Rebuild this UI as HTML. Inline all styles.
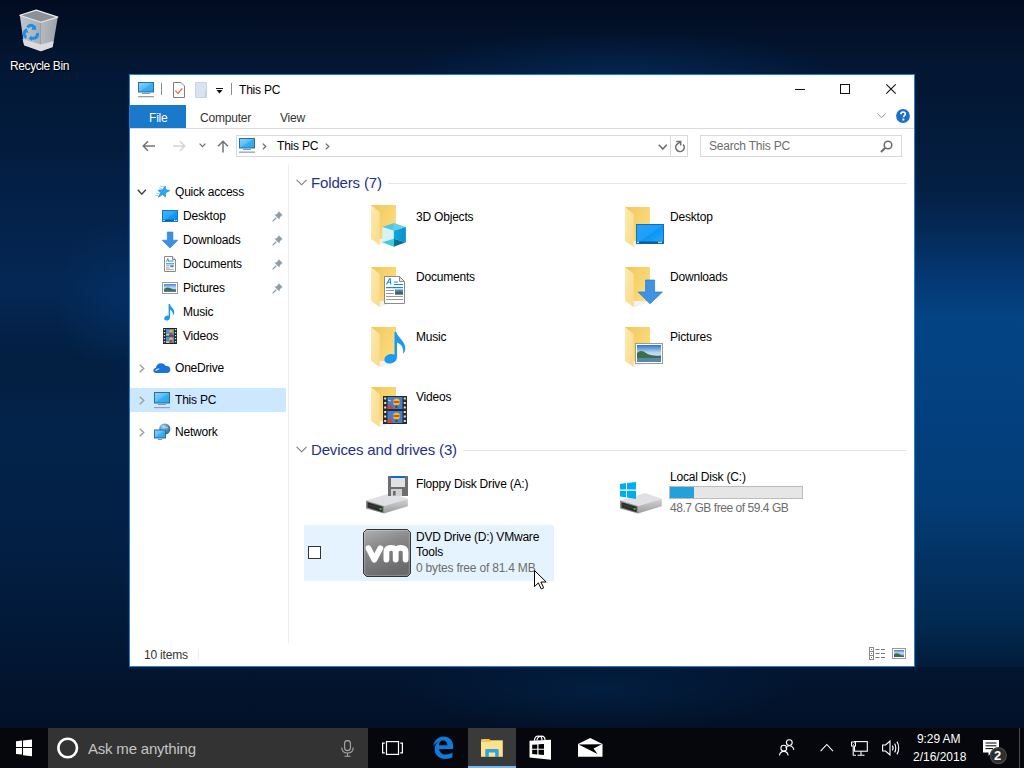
<!DOCTYPE html>
<html><head><meta charset="utf-8">
<style>
*{margin:0;padding:0;box-sizing:border-box}
html,body{width:1024px;height:768px;overflow:hidden}
body{position:relative;font-family:"Liberation Sans",sans-serif;font-size:12px;color:#000;background:#03213f;}
.a{position:absolute}
#bg{left:0;top:0;width:1024px;height:728px;
background:
radial-gradient(ellipse 220px 45px at 620px 76px, rgba(4,50,100,.55), rgba(4,50,100,0) 100%),
radial-gradient(ellipse 200px 40px at 600px 690px, rgba(4,42,88,.45), rgba(4,42,88,0) 100%),

radial-gradient(ellipse 70px 80px at 125px 300px, rgba(5,55,110,.5), rgba(5,55,110,0) 100%),
linear-gradient(180deg,#020b20 0,#031836 74px,#031c3e 150px,#04224a 210px,#042754 290px,#031e40 362px,#03244a 430px,#032046 520px,#021a3a 620px,#02132b 700px,#021128 728px);}
#rbg{left:915px;top:74px;width:109px;height:593px;
background:linear-gradient(180deg,#031632 0,#041f42 110px,#042a58 160px,#053874 205px,#044484 245px,#034080 326px,#033d78 426px,#033262 486px,#022a52 546px,#021c3a 593px);}
#win{left:129px;top:74px;width:786px;height:593px;background:#fff;border:1px solid #1883d7}
#taskbar{left:0;top:728px;width:1024px;height:40px;background:#05070c}
.t{position:absolute;white-space:nowrap;line-height:12px;font-size:12px;letter-spacing:-0.2px}
.h{font-size:15px;line-height:15px;color:#1e3287;letter-spacing:-0.15px}
svg{position:absolute;overflow:visible}
</style></head>
<body>
<div id="bg" class="a"></div><div id="rbg" class="a"></div>
<svg style="left:0;top:0;width:0;height:0" width="0" height="0">
<defs>
  <linearGradient id="fback" x1="0" y1="0" x2="1" y2=".6"><stop offset="0" stop-color="#f0c65c"/><stop offset="1" stop-color="#fcdc7c"/></linearGradient>
  <linearGradient id="fflap" x1="0" y1="0" x2="1" y2="1"><stop offset="0" stop-color="#feeaae"/><stop offset="1" stop-color="#f8da8a"/></linearGradient>
  <symbol id="folder" viewBox="0 0 40 46">
    <rect x="5" y="5" width="25" height="34" fill="url(#fback)"/>
    <path d="M13.7 45 L16 44.6 L30 39 H13.7 Z" fill="#d8d8e0" opacity=".35"/>
    <path d="M5 5 L13.7 12 V45 L5 39 Z" fill="url(#fflap)"/>
  </symbol>
</defs>
</svg>


<!-- recycle bin -->
<svg style="left:0;top:0" width="80" height="60" viewBox="0 0 80 60">
  <defs>
    <linearGradient id="rbl" x1="0" y1="0" x2="1" y2="0"><stop offset="0" stop-color="#c2c6cc"/><stop offset="1" stop-color="#a9aeb5"/></linearGradient>
    <linearGradient id="rbr" x1="0" y1="0" x2="1" y2="0"><stop offset="0" stop-color="#b4b9bf"/><stop offset="1" stop-color="#9da3aa"/></linearGradient>
  </defs>
  <path d="M19.8 15.3 L40.9 22.3 L40.9 51.3 L24.1 45.3 Z" fill="url(#rbl)"/>
  <path d="M40.9 22.3 L57.8 17.1 L52.7 47.1 L40.9 51.3 Z" fill="url(#rbr)"/>
  <path d="M22.5 39 L40.9 44.5 L53.6 41 L52.7 47.1 L40.9 51.3 L24.1 45.3 Z" fill="#d9dbde"/>
  <path d="M19.8 15.3 L36.3 10.1 L57.8 17.1 L40.9 22.3 Z" fill="#8c9198" stroke="#e8eaec" stroke-width="1.2" stroke-linejoin="round"/>
  <path d="M27.5 27.5 Q29 25 31.5 25.3 L35.5 27.8" fill="none" stroke="#1e8fe8" stroke-width="3"/>
  <path d="M33.5 24.5 L37 29.5 L31.5 30 Z" fill="#1e8fe8"/>
  <path d="M26.5 37.5 Q24 36.5 24.3 33.5 L25.5 30" fill="none" stroke="#1e8fe8" stroke-width="3"/>
  <path d="M23 31.5 L26.5 28 L28.5 33 Z" fill="#1e8fe8"/>
  <path d="M37.5 33 Q38 37 35 38 L30.5 38.5" fill="none" stroke="#1e8fe8" stroke-width="3"/>
  <path d="M31.5 35.5 L28.5 38.5 L32 41 Z" fill="#1e8fe8"/>
</svg>
<div class="t" style="left:10px;top:60px;color:#fff;letter-spacing:-0.4px;text-shadow:0 0 2px #000,1px 1px 1px #000">Recycle Bin</div>

<div id="win" class="a"></div>


<!-- title icons -->
<svg style="left:138px;top:82px" width="16" height="16" viewBox="0 0 16 16">
  <defs><linearGradient id="scr" x1="0" y1="0" x2="1" y2="1"><stop offset="0" stop-color="#8fd3ff"/><stop offset=".5" stop-color="#55bdf7"/><stop offset=".5" stop-color="#3cb0f3"/><stop offset="1" stop-color="#2aa3ec"/></linearGradient></defs>
  <rect x="0.5" y="0.5" width="15" height="9.5" fill="url(#scr)" stroke="#2d6e9c" stroke-width="1"/>
  <rect x="4" y="11" width="8" height="1" fill="#7e98ae"/>
  <rect x="0" y="14" width="16" height="1.3" fill="#8da2b5"/>
</svg>
<div class="a" style="left:161px;top:83px;width:1px;height:12px;background:#8a8a8a"></div>
<svg style="left:173px;top:82px" width="12" height="16" viewBox="0 0 12 16">
  <path d="M0.5 0.5 H8 L11.5 4 V15.5 H0.5 Z" fill="#fff" stroke="#7d7d7d"/>
  <path d="M8 0.5 L11.5 4" stroke="#c8c8c8"/>
  <path d="M2.3 8.6 L5 11.3 L9.3 6.4" fill="none" stroke="#f2622a" stroke-width="1.2"/>
</svg>
<svg style="left:195px;top:82px" width="13" height="16" viewBox="0 0 13 16">
  <path d="M0.5 0.5 H11.5 V15.5 H0.5 Z" fill="#dae3f0" stroke="#c9d5e6"/>
  <path d="M11.5 9 V15.5 H10 V9 Z" fill="#c5d2e4"/>
</svg>
<svg style="left:216px;top:88px" width="8" height="7" viewBox="0 0 8 7">
  <rect x="0" y="0" width="7" height="1" fill="#111"/>
  <path d="M0.5 2 H6.5 L3.5 5.5 Z" fill="#111"/>
</svg>
<div class="a" style="left:231px;top:83px;width:1px;height:12px;background:#8a8a8a"></div>

<!-- window controls -->
<div class="a" style="left:795px;top:89px;width:10px;height:1px;background:#111"></div>
<div class="a" style="left:840px;top:84px;width:10px;height:10px;border:1px solid #111"></div>
<svg style="left:886px;top:84px" width="10" height="10" viewBox="0 0 10 10"><path d="M0.3 0.3 L9.7 9.7 M9.7 0.3 L0.3 9.7" stroke="#111" stroke-width="1.1"/></svg>
<svg style="left:877px;top:113px" width="9" height="6" viewBox="0 0 9 6"><path d="M0.5 0.5 L4.5 4.8 L8.5 0.5" fill="none" stroke="#9a9a9a" stroke-width="1"/></svg>
<svg style="left:896px;top:109px" width="14" height="14" viewBox="0 0 14 14">
  <circle cx="7" cy="7" r="6.9" fill="#1a6fc9"/>
  <path d="M4.9 5.2 C4.9 3.6 6 3 7.1 3 C8.3 3 9.3 3.7 9.3 4.9 C9.3 6.4 7.5 6.6 7.5 8.2" fill="none" stroke="#fff" stroke-width="1.7"/>
  <rect x="6.4" y="9.6" width="1.9" height="1.9" fill="#fff"/>
</svg>

<!-- nav arrows -->
<svg style="left:142px;top:140px" width="14" height="12" viewBox="0 0 14 12"><path d="M13 6 H1.5 M6 1.2 L1.2 6 L6 10.8" fill="none" stroke="#737373" stroke-width="1.5"/></svg>
<svg style="left:172px;top:140px" width="14" height="12" viewBox="0 0 14 12"><path d="M1 6 H12.5 M8 1.2 L12.8 6 L8 10.8" fill="none" stroke="#d4d4d4" stroke-width="1.5"/></svg>
<svg style="left:199px;top:143px" width="7" height="5" viewBox="0 0 7 5"><path d="M0.6 0.6 L3.5 3.6 L6.4 0.6" fill="none" stroke="#6a6a6a" stroke-width="1.2"/></svg>
<svg style="left:217px;top:140px" width="12" height="13" viewBox="0 0 12 13"><path d="M6 12.5 V1.5 M1 6.3 L6 1.2 L11 6.3" fill="none" stroke="#737373" stroke-width="1.5"/></svg>

<svg style="left:239px;top:138px" width="16" height="15" viewBox="0 0 16 15">
  <rect x="0.5" y="0.5" width="15" height="9.5" fill="url(#scr)" stroke="#2d6e9c" stroke-width="1"/>
  <rect x="4" y="11" width="8" height="1" fill="#7e98ae"/>
  <rect x="0" y="13.5" width="16" height="1.3" fill="#8da2b5"/>
</svg>
<svg style="left:262px;top:143px" width="5" height="7" viewBox="0 0 5 7"><path d="M0.8 0.6 L3.8 3.5 L0.8 6.4" fill="none" stroke="#666" stroke-width="1.2"/></svg>
<svg style="left:325px;top:143px" width="5" height="7" viewBox="0 0 5 7"><path d="M0.8 0.6 L3.8 3.5 L0.8 6.4" fill="none" stroke="#666" stroke-width="1.2"/></svg>
<svg style="left:658px;top:144px" width="10" height="7" viewBox="0 0 10 7"><path d="M0.8 0.8 L4.8 5 L8.8 0.8" fill="none" stroke="#6f6f6f" stroke-width="1.6"/></svg>
<svg style="left:670px;top:136px" width="20" height="20" viewBox="0 0 20 20">
  <path d="M13.2 8.6 A4.2 4.2 0 1 1 7.2 8.2 L10.6 5.6" fill="none" stroke="#707070" stroke-width="1.6"/>
  <path d="M6.2 5.5 H10.7 V9.6" fill="none" stroke="#707070" stroke-width="1.5"/>
</svg>
<svg style="left:880px;top:140px" width="13" height="13" viewBox="0 0 13 13">
  <circle cx="8" cy="5" r="3.8" fill="none" stroke="#6a6a6a" stroke-width="1.5"/>
  <path d="M5.3 7.7 L1 12" stroke="#6a6a6a" stroke-width="2"/>
</svg>

<!-- title bar -->
<div class="t" style="left:239px;top:84px">This PC</div>
<!-- ribbon tabs -->
<div class="a" style="left:130px;top:105px;width:56px;height:23px;background:#1979ca"></div>
<div class="t" style="left:149px;top:112px;color:#fff">File</div>
<div class="t" style="left:200px;top:112px;color:#333">Computer</div>
<div class="t" style="left:280px;top:112px;color:#333">View</div>
<div class="a" style="left:130px;top:128px;width:784px;height:1px;background:#dadbdc"></div>

<!-- address row -->
<div class="a" style="left:236px;top:135px;width:452px;height:22px;border:1px solid #d9d9d9"></div>
<div class="a" style="left:670px;top:135px;width:1px;height:22px;background:#d9d9d9"></div>
<div class="t" style="left:277px;top:140px">This PC</div>
<div class="a" style="left:700px;top:135px;width:202px;height:22px;border:1px solid #d9d9d9"></div>
<div class="t" style="left:709px;top:140px;color:#6d6d6d">Search This PC</div>

<!-- nav pane -->
<div class="a" style="left:288px;top:164px;width:1px;height:479px;background:#f0f0f0"></div>
<div class="a" style="left:130px;top:388px;width:156px;height:24px;background:#cce8ff"></div>
<div class="t" style="left:175px;top:186px">Quick access</div>
<div class="t" style="left:183px;top:210px">Desktop</div>
<div class="t" style="left:183px;top:234px">Downloads</div>
<div class="t" style="left:183px;top:258px">Documents</div>
<div class="t" style="left:183px;top:282px">Pictures</div>
<div class="t" style="left:183px;top:306px">Music</div>
<div class="t" style="left:183px;top:330px">Videos</div>
<div class="t" style="left:175px;top:362px">OneDrive</div>
<div class="t" style="left:175px;top:394px">This PC</div>
<div class="t" style="left:175px;top:426px">Network</div>


<!-- nav icons -->
<svg style="left:137px;top:189px" width="10" height="7" viewBox="0 0 10 7"><path d="M0.8 0.8 L4.8 5.2 L8.8 0.8" fill="none" stroke="#444" stroke-width="1.5"/></svg>
<svg style="left:150px;top:180px" width="24" height="24" viewBox="0 0 24 24">
  <path d="M10.3 6.3 H14.5 M9.2 8.3 H12 M6.2 13.4 H9 M5.3 15.5 H8" stroke="#7cc4f2" stroke-width="1" opacity=".8"/>
  <path d="M15.3 6.1 L15.8 9.7 L19.8 10.5 L15.8 12.7 L15.3 17 L12.6 14.6 L8.3 17.3 L10.6 12.8 L8 10.3 L12.5 9.7 Z" fill="#2ba8f2" stroke="#1c8ad9" stroke-width=".7" stroke-linejoin="round"/>
</svg>
<svg style="left:162px;top:210px" width="16" height="12" viewBox="0 0 16 12">
  <defs><linearGradient id="dsk" x1="0" y1="0" x2="1" y2="1"><stop offset="0" stop-color="#3db4ff"/><stop offset=".5" stop-color="#29a8fb"/><stop offset=".5" stop-color="#159cf5"/><stop offset="1" stop-color="#0e8de6"/></linearGradient></defs>
  <rect x="0.5" y="0.5" width="15" height="11" fill="url(#dsk)" stroke="#1779c9"/>
  <rect x="1" y="9.6" width="14" height="1.6" fill="#0a5ea8"/>
  <circle cx="2" cy="10.4" r=".7" fill="#fff"/><circle cx="12.5" cy="10.4" r=".7" fill="#fff"/><circle cx="14.2" cy="10.4" r=".7" fill="#fff"/>
</svg>
<svg style="left:162px;top:232px" width="16" height="16" viewBox="0 0 16 16">
  <path d="M5.3 0 H10.9 V8.2 H15.9 L8 16 L0.1 8.2 H5.3 Z" fill="#3a90e2" stroke="#2a7bd3" stroke-width=".6"/>
</svg>
<svg style="left:164px;top:256px" width="12" height="16" viewBox="0 0 12 16">
  <path d="M0.5 0.5 H8.5 L11.5 3.5 V15.5 H0.5 Z" fill="#fff" stroke="#8a8a8a"/>
  <path d="M8.5 0.5 V3.5 H11.5" fill="#e8e8e8" stroke="#8a8a8a"/>
  <path d="M2.5 6 L3.8 2.5 L5 6" fill="none" stroke="#1a86d9" stroke-width=".9"/>
  <rect x="5.5" y="4.5" width="4" height="1" fill="#1a86d9"/>
  <rect x="2" y="7.3" width="8" height="1" fill="#1a86d9"/>
  <rect x="2" y="9.3" width="3.5" height="1" fill="#999"/><rect x="6.2" y="9.1" width="3.5" height="2.2" fill="#5d8fb3"/>
  <rect x="2" y="11.4" width="3.5" height="1" fill="#999"/>
  <rect x="2" y="13.2" width="8" height="1" fill="#aaa"/>
</svg>
<svg style="left:162px;top:282px" width="16" height="12" viewBox="0 0 16 12">
  <defs><linearGradient id="pic" x1="0" y1="0" x2="0" y2="1"><stop offset="0" stop-color="#3f86d8"/><stop offset=".5" stop-color="#c9ddef"/><stop offset="1" stop-color="#6f98b0"/></linearGradient></defs>
  <rect x="0.5" y="0.5" width="15" height="11" fill="#fff" stroke="#9a9a9a"/>
  <rect x="2" y="2" width="12" height="8" fill="url(#pic)"/>
  <path d="M2 7 Q5 4.5 8 6 T14 7.5 V10 H2 Z" fill="#3e6b4c"/>
  <rect x="2" y="8.6" width="12" height="1.4" fill="#4a7fa8"/>
</svg>
<svg style="left:164px;top:304px" width="11" height="17" viewBox="0 0 11 17">
  <path d="M4.6 0 H6 C6.3 3 10.5 4.5 10.3 8.5 C10.1 10 9.4 10.8 8.8 11.4 C9.3 9.5 8.5 6.8 6.1 5.8 V13.2 C6.1 15.3 4.3 16.6 2.6 16.6 C1.2 16.6 0.2 15.8 0.2 14.6 C0.2 13 1.9 11.6 3.6 11.6 C4 11.6 4.3 11.7 4.6 11.8 Z" fill="#1a9af0"/>
</svg>
<svg style="left:163px;top:328px" width="14" height="16" viewBox="0 0 14 16">
  <rect x="0" y="0" width="14" height="16" fill="#222"/>
  <rect x="0.8" y="1" width="1.4" height="1.3" fill="#ddd"/><rect x="0.8" y="4" width="1.4" height="1.3" fill="#ddd"/><rect x="0.8" y="7" width="1.4" height="1.3" fill="#ddd"/><rect x="0.8" y="10" width="1.4" height="1.3" fill="#ddd"/><rect x="0.8" y="13" width="1.4" height="1.3" fill="#ddd"/>
  <rect x="11.8" y="1" width="1.4" height="1.3" fill="#ddd"/><rect x="11.8" y="4" width="1.4" height="1.3" fill="#ddd"/><rect x="11.8" y="7" width="1.4" height="1.3" fill="#ddd"/><rect x="11.8" y="10" width="1.4" height="1.3" fill="#ddd"/><rect x="11.8" y="13" width="1.4" height="1.3" fill="#ddd"/>
  <rect x="3" y="1" width="8" height="6.5" fill="#4f8fd8"/><rect x="3" y="8.5" width="8" height="6.5" fill="#4f8fd8"/>
  <circle cx="8" cy="3.5" r="1.8" fill="#e8b420"/><rect x="7" y="4.5" width="2" height="2.5" fill="#c7382a"/>
  <circle cx="8" cy="11" r="1.8" fill="#e8b420"/><rect x="7" y="12" width="2" height="2.5" fill="#c7382a"/>
  <rect x="3" y="6" width="3" height="1.5" fill="#e0d080"/><rect x="3" y="13.5" width="3" height="1.5" fill="#e0d080"/>
</svg>
<svg style="left:272px;top:211px" width="11" height="11" viewBox="0 0 11 11"><path d="M6.8 0.3 L10.7 4.2 L9.6 4.6 L7.6 6.8 L7.4 8.6 L2.4 3.6 L4.2 3.4 L6.4 1.4 Z" fill="#8e9ca6"/><path d="M4.2 6.8 L0.6 10.4" stroke="#8e9ca6" stroke-width="1.3"/></svg>
<svg style="left:272px;top:235px" width="11" height="11" viewBox="0 0 11 11"><path d="M6.8 0.3 L10.7 4.2 L9.6 4.6 L7.6 6.8 L7.4 8.6 L2.4 3.6 L4.2 3.4 L6.4 1.4 Z" fill="#8e9ca6"/><path d="M4.2 6.8 L0.6 10.4" stroke="#8e9ca6" stroke-width="1.3"/></svg>
<svg style="left:272px;top:259px" width="11" height="11" viewBox="0 0 11 11"><path d="M6.8 0.3 L10.7 4.2 L9.6 4.6 L7.6 6.8 L7.4 8.6 L2.4 3.6 L4.2 3.4 L6.4 1.4 Z" fill="#8e9ca6"/><path d="M4.2 6.8 L0.6 10.4" stroke="#8e9ca6" stroke-width="1.3"/></svg>
<svg style="left:272px;top:283px" width="11" height="11" viewBox="0 0 11 11"><path d="M6.8 0.3 L10.7 4.2 L9.6 4.6 L7.6 6.8 L7.4 8.6 L2.4 3.6 L4.2 3.4 L6.4 1.4 Z" fill="#8e9ca6"/><path d="M4.2 6.8 L0.6 10.4" stroke="#8e9ca6" stroke-width="1.3"/></svg>
<svg style="left:139px;top:364px" width="6" height="9" viewBox="0 0 6 9"><path d="M0.7 0.7 L4.8 4.5 L0.7 8.3" fill="none" stroke="#9a9a9a" stroke-width="1.3"/></svg>
<svg style="left:139px;top:396px" width="6" height="9" viewBox="0 0 6 9"><path d="M0.7 0.7 L4.8 4.5 L0.7 8.3" fill="none" stroke="#9a9a9a" stroke-width="1.3"/></svg>
<svg style="left:139px;top:428px" width="6" height="9" viewBox="0 0 6 9"><path d="M0.7 0.7 L4.8 4.5 L0.7 8.3" fill="none" stroke="#9a9a9a" stroke-width="1.3"/></svg>

<svg style="left:153px;top:362px" width="18" height="12" viewBox="0 0 18 12">
  <path d="M3.2 11 C1.3 11 0.4 9.8 0.4 8.5 C0.4 7.1 1.4 6.1 2.8 6 C3.3 3.2 5.4 1.2 8.2 1.2 C10.3 1.2 11.9 2.3 12.8 4.1 C13.2 4 13.5 4 13.8 4 C15.8 4 17.4 5.6 17.4 7.5 C17.4 9.5 15.9 11 13.9 11 Z" fill="#1b74d8"/>
  <path d="M2.6 8.6 C3.6 7.3 5 6.9 6.2 7.1" fill="none" stroke="#fff" stroke-width="1.1"/>
</svg>
<svg style="left:154px;top:392px" width="16" height="16" viewBox="0 0 16 16">
  <rect x="0.5" y="0.5" width="15" height="10.5" fill="url(#scr)" stroke="#2d6e9c" stroke-width="1"/>
  <rect x="4" y="12" width="8" height="1" fill="#7e98ae"/>
  <rect x="0" y="15" width="16" height="1.2" fill="#8da2b5"/>
</svg>
<svg style="left:154px;top:423px" width="17" height="17" viewBox="0 0 17 17">
  <defs><radialGradient id="glb" cx=".4" cy=".35" r=".7"><stop offset="0" stop-color="#a8d8f0"/><stop offset=".6" stop-color="#4a8cba"/><stop offset="1" stop-color="#2a5e8a"/></radialGradient></defs>
  <circle cx="10.8" cy="6" r="5.6" fill="url(#glb)"/>
  <path d="M7 3.5 Q9 2 11 3.5 Q12 5 14 4.5 M8.5 8 Q10 7 12 9" fill="none" stroke="#d8eef8" stroke-width=".7" opacity=".8"/>
  <rect x="0.5" y="7" width="11" height="8" fill="url(#scr)" stroke="#2d6e9c"/>
  <rect x="4" y="16" width="4" height="1" fill="#7e98ae"/>
</svg>

<!-- content -->
<div class="a" style="left:304px;top:525px;width:250px;height:56px;background:#e5f3ff"></div>

<div class="t h" style="left:311px;top:175px">Folders (7)</div>
<div class="a" style="left:388px;top:183px;width:519px;height:1px;background:#e5e5e5"></div>

<!-- folder icons -->
<svg style="left:366px;top:200px" width="40" height="46"><use href="#folder"/></svg>
<svg style="left:366px;top:200px" width="44" height="50" viewBox="0 0 44 50">
  <defs><linearGradient id="cubr" x1="0" y1="0" x2="1" y2="0"><stop offset="0" stop-color="#08acd8"/><stop offset="1" stop-color="#0a8fd2"/></linearGradient></defs>
  <path d="M16.2 27.1 L27.85 23.1 V30.75 Z" fill="#55c6df"/>
  <path d="M27.85 23.1 L39.9 27.1 L27.85 30.75 Z" fill="#62d0ec"/>
  <path d="M16.2 27.1 L27.85 30.75 V38.8 L16.2 42.2 Z" fill="#d6f1f7"/>
  <path d="M27.85 30.75 L39.9 27.1 V42.2 L27.85 38.8 Z" fill="url(#cubr)"/>
  <path d="M16.2 42.2 L27.85 38.8 V46.8 Z" fill="#3ccbe0"/>
  <path d="M27.85 38.8 L39.9 42.2 L27.85 46.8 Z" fill="#0a6f94"/>
</svg>

<svg style="left:366px;top:262px" width="40" height="46"><use href="#folder"/></svg>
<svg style="left:384px;top:276px" width="21" height="28" viewBox="0 0 21 28">
  <path d="M0.5 0.5 H15.5 L20.5 5.5 V27.5 H0.5 Z" fill="#fff" stroke="#8a8a8a"/>
  <path d="M15.5 0.5 V5.5 H20.5 Z" fill="#e6e6e6" stroke="#8a8a8a"/>
  <g transform="translate(0,1)"><path d="M2.5 7.5 L5.5 1.8 H6.3 L6.8 7.5 M3.8 5.3 H6.5" fill="none" stroke="#1e88db" stroke-width="1.1"/>
  <rect x="10" y="4.5" width="4" height="1" fill="#1e88db"/><rect x="10" y="7" width="9" height="1" fill="#1e88db"/>
  <rect x="2" y="10" width="17" height="1.2" fill="#1a86d9"/>
  <rect x="2" y="13" width="8" height="1" fill="#9a9a9a"/><rect x="2" y="16" width="8" height="1" fill="#9a9a9a"/>
  <rect x="2" y="19" width="17" height="1" fill="#9a9a9a"/><rect x="2" y="22" width="17" height="1" fill="#9a9a9a"/>
  <rect x="11" y="12.5" width="8" height="5" fill="#4f86b8"/><path d="M11 16 Q14 13.5 19 15.5 V17.5 H11 Z" fill="#3a6a48"/></g>
</svg>

<svg style="left:366px;top:322px" width="40" height="46"><use href="#folder"/></svg>
<svg style="left:384px;top:332px" width="22" height="32" viewBox="0 0 22 32">
  <path d="M10.5 0 H12.3 C12.8 5 21.5 8.5 21.3 17 C21.2 19.5 20 21 19 21.8 C20 18 18.5 12.5 13 10.5 V25 C13 28.8 9.5 31.6 5.5 31.6 C2.5 31.6 0.4 30 0.4 27.8 C0.4 24.6 3.6 22 7.4 22 C8.6 22 9.6 22.3 10.5 22.7 Z" fill="#1a9af0"/>
</svg>

<svg style="left:366px;top:382px" width="40" height="46"><use href="#folder"/></svg>
<svg style="left:383px;top:396px" width="24" height="28" viewBox="0 0 24 28">
  <rect x="0" y="0" width="24" height="28" fill="#2a2a2a"/>
  <g fill="#e8e8d8">
   <rect x="1.2" y="1.5" width="2" height="2"/><rect x="1.2" y="6" width="2" height="2"/><rect x="1.2" y="10.5" width="2" height="2"/><rect x="1.2" y="15" width="2" height="2"/><rect x="1.2" y="19.5" width="2" height="2"/><rect x="1.2" y="24" width="2" height="2"/>
   <rect x="20.8" y="1.5" width="2" height="2"/><rect x="20.8" y="6" width="2" height="2"/><rect x="20.8" y="10.5" width="2" height="2"/><rect x="20.8" y="15" width="2" height="2"/><rect x="20.8" y="19.5" width="2" height="2"/><rect x="20.8" y="24" width="2" height="2"/>
  </g>
  <rect x="4.5" y="1" width="15" height="12" fill="#3f7fd6"/><rect x="4.5" y="15" width="15" height="12" fill="#3f7fd6"/>
  <circle cx="13.5" cy="6" r="3.5" fill="#f0c020"/><path d="M10.5 6 H16.5" stroke="#d83020" stroke-width="1.6"/><rect x="12.5" y="9.5" width="2" height="2.5" fill="#6a3a20"/>
  <circle cx="13.5" cy="20" r="3.5" fill="#f0c020"/><path d="M10.5 20 H16.5" stroke="#d83020" stroke-width="1.6"/><rect x="12.5" y="23.5" width="2" height="2.5" fill="#6a3a20"/>
  <path d="M4.5 10 L8 8 L10 13 H4.5 Z" fill="#d84040"/><path d="M4.5 24 L8 22 L10 27 H4.5 Z" fill="#d84040"/>
  <path d="M5 4 L8 5" stroke="#cfe6c0" stroke-width="1"/>
</svg>

<svg style="left:620px;top:202px" width="40" height="46"><use href="#folder"/></svg>
<svg style="left:636px;top:224px" width="28" height="20" viewBox="0 0 28 20">
  <defs><linearGradient id="dsk2" x1="0" y1="0" x2="1" y2="1"><stop offset="0" stop-color="#2aa2f6"/><stop offset=".5" stop-color="#1aa0fa"/><stop offset=".52" stop-color="#0d95f2"/><stop offset="1" stop-color="#2aa8f8"/></linearGradient></defs>
  <rect x="0.5" y="0.5" width="27" height="19" fill="url(#dsk2)" stroke="#0f6fb8"/>
  <rect x="1" y="17.5" width="26" height="2" fill="#0a5a9c"/>
  <circle cx="2" cy="18.4" r=".8" fill="#fff"/><circle cx="23" cy="18.4" r=".8" fill="#fff"/><circle cx="25" cy="18.4" r=".8" fill="#fff"/>
</svg>

<svg style="left:620px;top:262px" width="40" height="46"><use href="#folder"/></svg>
<svg style="left:638px;top:280px" width="25" height="24" viewBox="0 0 25 24">
  <path d="M7.6 0 H16.6 V12 H24.4 L12.1 23.8 L0.1 12 H7.6 Z" fill="#3d92e4" stroke="#2a78cc" stroke-width=".7"/>
</svg>

<svg style="left:620px;top:322px" width="40" height="46"><use href="#folder"/></svg>
<svg style="left:635px;top:343px" width="28" height="21" viewBox="0 0 28 21">
  <defs><linearGradient id="pic2" x1="0" y1="0" x2="0" y2="1"><stop offset="0" stop-color="#2e74c8"/><stop offset=".45" stop-color="#bcd6ee"/><stop offset="1" stop-color="#e0ecf4"/></linearGradient></defs>
  <rect x="0.5" y="0.5" width="27" height="20" fill="#fff" stroke="#9a9a9a"/>
  <rect x="2" y="2" width="24" height="17" fill="url(#pic2)"/>
  <path d="M2 10 Q6 6 11 10 Q16 13.5 26 12.5 V19 H2 Z" fill="#3d6e4a"/>
  <path d="M2 15 H26 V19 H2 Z" fill="#5588aa"/>
</svg>
<div class="t" style="left:416px;top:211px">3D Objects</div>
<div class="t" style="left:416px;top:271px">Documents</div>
<div class="t" style="left:416px;top:331px">Music</div>
<div class="t" style="left:416px;top:391px">Videos</div>
<div class="t" style="left:670px;top:211px">Desktop</div>
<div class="t" style="left:670px;top:271px">Downloads</div>
<div class="t" style="left:670px;top:331px">Pictures</div>


<!-- section chevrons -->
<svg style="left:296px;top:179px" width="12" height="8" viewBox="0 0 12 8"><path d="M0.6 0.8 L5.6 5.8 L10.6 0.8" fill="none" stroke="#7a7a7a" stroke-width="1.1"/></svg>
<svg style="left:296px;top:446px" width="12" height="8" viewBox="0 0 12 8"><path d="M0.6 0.8 L5.6 5.8 L10.6 0.8" fill="none" stroke="#7a7a7a" stroke-width="1.1"/></svg>

<svg style="left:0;top:0;width:0;height:0" width="0" height="0"><defs>
  <linearGradient id="drr" x1="0" y1="0" x2="0" y2="1"><stop offset="0" stop-color="#d4d4d6"/><stop offset="1" stop-color="#9c9c9e"/></linearGradient>
  <symbol id="drive" viewBox="0 0 48 24">
    <path d="M0 7.4 L25 0 L41.8 5.7 L18 12.9 Z" fill="#e0e1e4"/>
    <path d="M18 12.9 L41.8 5.7 V13.2 L18 20.6 Z" fill="url(#drr)"/>
    <path d="M0 7.4 L18 12.9 V20.6 L0 15.4 Z" fill="#8c8c8c"/>
    <path d="M1.5 9.2 L16.6 13.8 V19.2 L1.5 14.6 Z" fill="#2b2b2b"/>
    <path d="M2.5 11.8 L15 15.6" stroke="#444" stroke-width=".8"/>
    <rect x="13.6" y="15.2" width="2" height="1.6" fill="#36d846"/>
  </symbol>
</defs></svg>
<svg style="left:366px;top:493px" width="48" height="24"><use href="#drive"/></svg>
<svg style="left:388px;top:476px" width="20" height="20" viewBox="0 0 20 20">
  <rect x="0" y="0" width="20" height="20" fill="#6e6e6e"/>
  <rect x="3" y="0" width="14" height="11" fill="#e2e2e4"/>
  <rect x="3" y="0" width="14" height="2" fill="#0e6cc4"/>
  <rect x="3" y="13" width="11" height="7" fill="#d0d0d2"/>
  <rect x="5" y="15" width="2.6" height="4.5" fill="#6a6a6a"/>
</svg>

<svg style="left:620px;top:493px" width="48" height="24"><use href="#drive"/></svg>
<svg style="left:620px;top:482px" width="17" height="17" viewBox="0 0 17 17">
  <path d="M0 2 L6 1.1 V7.6 H0 Z M7 1 L16 0 V7.6 H7 Z M0 8.8 H6 V15.4 L0 14.6 Z M7 8.8 H16 V17 L7 15.6 Z" fill="#00adef"/>
</svg>

<svg style="left:363px;top:529px" width="48" height="48" viewBox="0 0 48 48">
  <defs><linearGradient id="vmg" x1="0" y1="0" x2=".35" y2="1"><stop offset="0" stop-color="#b2b2b2"/><stop offset=".4" stop-color="#8a8a8a"/><stop offset="1" stop-color="#6a6a6e"/></linearGradient></defs>
  <path d="M3.5 0.5 H44.5 L47.5 3.5 V44.5 L44.5 47.5 H3.5 L0.5 44.5 V3.5 Z" fill="url(#vmg)" stroke="#343434"/>
  <path d="M3.9 1.6 H44.1 L46.4 3.9 V44.1 L44.1 46.4 H3.9 L1.6 44.1 V3.9 Z" fill="none" stroke="#fff" stroke-opacity=".25"/>
  <path d="M5.4 19.2 L11.3 30.6 L17.4 19.2" fill="none" stroke="#fff" stroke-width="5.8" stroke-linecap="round" stroke-linejoin="round"/>
  <path d="M23.4 30.6 V23 C23.4 20 25.5 18.9 28.1 18.9 C30.8 18.9 32.7 20 32.7 23 V30.6 M32.7 23 C32.7 20 34.8 18.9 37.6 18.9 C40.4 18.9 42.6 20 42.6 23 V30.6" fill="none" stroke="#fff" stroke-width="5.8" stroke-linecap="round" stroke-linejoin="round"/>
</svg>
<div class="t h" style="left:311px;top:442px">Devices and drives (3)</div>
<div class="a" style="left:463px;top:450px;width:444px;height:1px;background:#e5e5e5"></div>
<div class="t" style="left:416px;top:478px">Floppy Disk Drive (A:)</div>
<div class="t" style="left:670px;top:471px">Local Disk (C:)</div>
<div class="a" style="left:669px;top:486px;width:134px;height:13px;background:#e6e6e6;border:1px solid #bcbcbc"></div>
<div class="a" style="left:670px;top:487px;width:24px;height:11px;background:#26a0da"></div>
<div class="t" style="left:670px;top:502px;color:#6d6d6d;letter-spacing:-0.45px">48.7 GB free of 59.4 GB</div>

<div class="a" style="left:308px;top:546px;width:13px;height:13px;border:1px solid #333;background:#fff"></div>
<div class="t" style="left:416px;top:531px">DVD Drive (D:) VMware</div>
<div class="t" style="left:416px;top:546px">Tools</div>
<div class="t" style="left:416px;top:562px;color:#6d6d6d">0 bytes free of 81.4 MB</div>

<!-- status -->
<div class="t" style="left:144px;top:649px;color:#333">10 items</div>
<div class="a" style="left:198px;top:649px;width:1px;height:11px;background:#f0f0f0"></div>


<!-- status icons -->
<svg style="left:869px;top:647px" width="17" height="13" viewBox="0 0 17 13">
  <rect x="0.5" y="0.5" width="4" height="12" fill="#fff" stroke="#8a8a8a"/>
  <path d="M0.5 4.5 H4.5 M0.5 8.5 H4.5" stroke="#8a8a8a"/>
  <rect x="2" y="2" width="1" height="1" fill="#3a7a5a"/><rect x="2" y="6" width="1" height="1" fill="#4a8ae0"/><rect x="2" y="10" width="1" height="1" fill="#e02020"/>
  <path d="M6.5 2.5 H10.5 M12 2.5 H16 M6.5 6.5 H10.5 M12 6.5 H16 M6.5 10.5 H10.5 M12 10.5 H16" stroke="#7a7a7a" stroke-width="1"/>
</svg>
<svg style="left:892px;top:648px" width="14" height="11" viewBox="0 0 14 11">
  <defs><linearGradient id="stp" x1="0" y1="0" x2="0" y2="1"><stop offset="0" stop-color="#3d7fd0"/><stop offset=".45" stop-color="#c8dcef"/><stop offset="1" stop-color="#4a78a8"/></linearGradient></defs>
  <rect x="0.5" y="0.5" width="13" height="10" fill="#fff" stroke="#9a9a9a"/>
  <rect x="2" y="2" width="10" height="7" fill="url(#stp)"/>
  <path d="M2 6 Q5 4.5 8 6.5 T12 7.5 V9 H2 Z" fill="#3f6a4c"/>
</svg>
<!-- cursor -->
<svg style="left:534px;top:570px" width="14" height="21" viewBox="0 0 14 21">
  <path d="M0.5 0.5 V16.6 L4.4 12.9 L7.2 18.9 L9.7 17.8 L6.9 12 H12.2 Z" fill="#fff" stroke="#000" stroke-width="1" stroke-linejoin="miter"/>
</svg>
<div id="taskbar" class="a"></div>
<svg style="left:16px;top:740px" width="17" height="17" viewBox="0 0 17 17">
  <path d="M0 1.3 L6 0.6 V7 H0 Z M7 0.5 L16 -0.4 V7 H7 Z M0 8 H6 V14.6 L0 13.9 Z M7 8 H16 V16.3 L7 15.3 Z" fill="#fff"/>
</svg>
<div class="a" style="left:48px;top:728px;width:320px;height:40px;background:#333"></div>
<svg style="left:56px;top:736px" width="24" height="24" viewBox="0 0 24 24"><circle cx="11.7" cy="12" r="9.3" fill="none" stroke="#fff" stroke-width="2.6"/></svg>
<div class="t" style="left:88px;top:741px;color:#c4c4c4;font-size:15px;line-height:15px;letter-spacing:-0.2px">Ask me anything</div>
<svg style="left:341px;top:740px" width="13" height="17" viewBox="0 0 13 17">
  <rect x="3.6" y="0.6" width="5.8" height="10" rx="2.9" fill="none" stroke="#aaa" stroke-width="1.1"/>
  <path d="M0.8 7.5 C0.8 11 3 13 6.5 13 C10 13 12.2 11 12.2 7.5 M6.5 13 V16 M3.5 16.2 H9.5" fill="none" stroke="#aaa" stroke-width="1.1"/>
</svg>
<svg style="left:382px;top:741px" width="21" height="14" viewBox="0 0 21 14">
  <rect x="4.5" y="0.6" width="12" height="12.8" fill="none" stroke="#fff" stroke-width="1.2"/>
  <path d="M2.8 2.2 H0.6 V11.8 H2.8 M18.2 2.2 H20.4 V11.8 H18.2" fill="none" stroke="#fff" stroke-width="1.2"/>
</svg>
<svg style="left:432px;top:736px" width="22" height="23" viewBox="0 0 22 23">
  <path d="M1.2 10.5 C1.8 4.5 6.3 0.6 11.8 0.6 C17.6 0.6 21.2 4.8 21.2 10.6 V13 H7.2 C7.6 16.6 10.2 18.6 13.6 18.6 C16.3 18.6 18.6 17.8 20.4 16.6 V21.2 C18.6 22.3 16.2 22.9 13.2 22.9 C6.6 22.9 2.6 18.6 2.6 13.3 C2.6 9.2 5 5.6 9.4 4.6 C7.6 5.8 6.9 7.5 6.9 9.3 H15.4 C15.4 6.4 13.8 4.4 10.9 4.4 C6.8 4.4 2.9 7 1.2 10.5 Z" fill="#0f7bd9"/>
</svg>
<div class="a" style="left:468px;top:728px;width:48px;height:40px;background:#3a3a3a"></div>
<div class="a" style="left:468px;top:766px;width:48px;height:2px;background:#76b9ed"></div>
<svg style="left:481px;top:739px" width="22" height="19" viewBox="0 0 22 19">
  <path d="M0 1.3 H21.8 V17.8 H0 Z" fill="#fde28b"/>
  <path d="M0 3 V1.2 Q0 0 1.2 0 H8.2 L9.8 1.5 V3 Z" fill="#f4c244"/>
  <rect x="1.6" y="0.9" width="3.5" height="1" fill="#9fd8e8"/>
  <path d="M4.3 18 V11.3 Q4.3 10 5.6 10 H16.4 Q17.7 10 17.7 11.3 V18 H14.2 V13.4 H7.8 V18 Z" fill="#29a3e6"/>
</svg>
<svg style="left:529px;top:735px" width="23" height="25" viewBox="0 0 23 25">
  <path d="M0.5 5.8 L22 4.8 V24.8 L0.5 22.6 Z" fill="#fff"/>
  <path d="M5.5 5.8 C5.5 2.5 7 1 9.5 1 C12 1 13 2.5 13 5 M8 5.6 C8 2.8 9.8 1.2 12.5 1.2 C15 1.2 16 3 16 5.2" fill="none" stroke="#fff" stroke-width="1.2"/>
  <path d="M3.2 9.8 L8.3 9.4 V13.7 H3.2 Z M9.5 9.3 L15 8.9 V13.7 H9.5 Z M3.2 14.8 H8.3 V19.4 L3.2 19 Z M9.5 14.8 H15 V20 L9.5 19.5 Z" fill="#000"/>
</svg>
<svg style="left:578px;top:738px" width="25" height="19" viewBox="0 0 25 19">
  <path d="M0 6 L12.2 0 L24.5 6 V18.8 H0 Z" fill="#fff"/>
  <path d="M0.6 6.5 L19.5 16 L15.5 10.6 L23.8 6.3 Z" fill="#000"/>
</svg>
<svg style="left:779px;top:739px" width="16" height="17" viewBox="0 0 16 17">
  <circle cx="10.3" cy="3.6" r="2.9" fill="none" stroke="#fff" stroke-width="1.1"/>
  <path d="M6.6 9.2 C7.4 7.4 8.7 6.8 10.3 6.8 C12.6 6.8 14.3 8.4 14.8 11" fill="none" stroke="#fff" stroke-width="1.1"/>
  <circle cx="4.8" cy="9.2" r="2.9" fill="none" stroke="#fff" stroke-width="1.1"/>
  <path d="M0.5 16.5 C0.8 14 2.5 12.4 4.8 12.4 C7.1 12.4 8.8 14 9.1 16.5" fill="none" stroke="#fff" stroke-width="1.1"/>
</svg>
<svg style="left:820px;top:743px" width="14" height="9" viewBox="0 0 14 9"><path d="M0.6 8.2 L6.8 1.5 L13 8.2" fill="none" stroke="#fff" stroke-width="1.1"/></svg>
<svg style="left:851px;top:741px" width="17" height="15" viewBox="0 0 17 15">
  <rect x="3.5" y="0.6" width="12.8" height="9.6" fill="none" stroke="#fff" stroke-width="1.1"/>
  <path d="M10 10.2 V13.8 M6.5 14.2 H13.5 M2.2 5.5 V14.5 M2.2 14.2 H5" fill="none" stroke="#fff" stroke-width="1.1"/>
  <rect x="0.5" y="1" width="4" height="4" fill="#000" stroke="#fff" stroke-width="1"/>
  <path d="M1.5 2.6 L2.5 3.6 L3.6 2.4" fill="none" stroke="#fff" stroke-width=".8"/>
</svg>
<svg style="left:882px;top:740px" width="18" height="16" viewBox="0 0 18 16">
  <path d="M0.6 5 H3.6 L8 1 V15 L3.6 11 H0.6 Z" fill="none" stroke="#fff" stroke-width="1.1"/>
  <path d="M10.3 5.6 C11.2 6.8 11.2 9.2 10.3 10.4 M12.6 3.6 C14.2 5.8 14.2 10.2 12.6 12.4 M14.9 1.6 C17.3 4.8 17.3 11.2 14.9 14.4" fill="none" stroke="#fff" stroke-width="1.1"/>
</svg>
<div class="t" style="left:917px;top:733px;color:#fff;letter-spacing:-0.1px">9:29 AM</div>
<div class="t" style="left:913px;top:751px;color:#fff;letter-spacing:0px">2/16/2018</div>
<svg style="left:982px;top:739px" width="26" height="26" viewBox="0 0 26 26">
  <path d="M1 1 H17 V13.5 H9.5 L6.5 16.8 V13.5 H1 Z" fill="#fff"/>
  <path d="M3.5 4 H14.5 M3.5 6.8 H14.5 M3.5 9.6 H11" stroke="#000" stroke-width="1"/>
  <circle cx="16.3" cy="16.6" r="8" fill="#2e2e2e" stroke="#4a4a4a" stroke-width="1.2"/>
</svg>
<div class="t" style="left:994px;top:749px;color:#fff;font-size:13px;line-height:13px;font-weight:bold">2</div>
<div class="a" style="left:1019px;top:728px;width:1px;height:40px;background:#4a4a4a"></div>
</body></html>
